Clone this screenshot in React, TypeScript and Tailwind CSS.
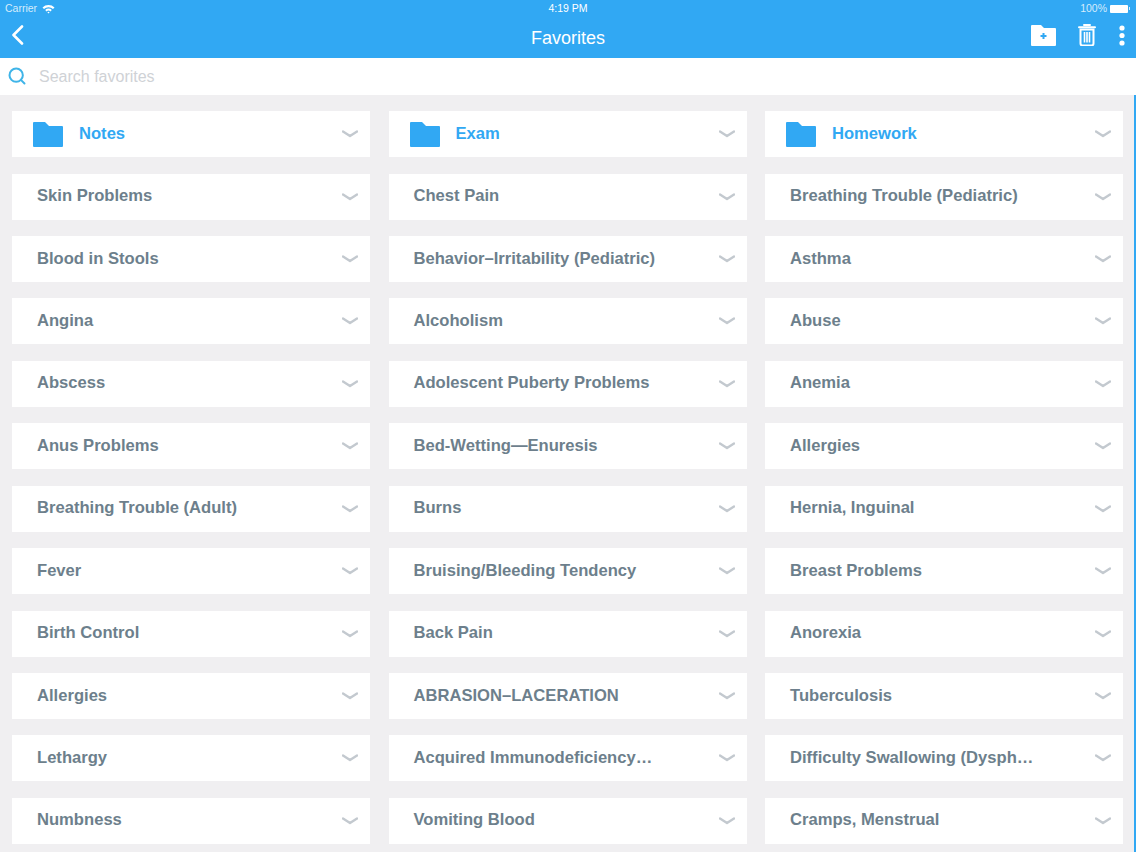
import React from 'react';
import { Search } from 'lucide-react';

const folders = ['Notes', 'Exam', 'Homework'];

const rows = [
    ['Skin Problems', 'Chest Pain', 'Breathing Trouble (Pediatric)'],
    ['Blood in Stools', 'Behavior–Irritability (Pediatric)', 'Asthma'],
    ['Angina', 'Alcoholism', 'Abuse'],
    ['Abscess', 'Adolescent Puberty Problems', 'Anemia'],
    ['Anus Problems', 'Bed-Wetting—Enuresis', 'Allergies'],
    ['Breathing Trouble (Adult)', 'Burns', 'Hernia, Inguinal'],
    ['Fever', 'Bruising/Bleeding Tendency', 'Breast Problems'],
    ['Birth Control', 'Back Pain', 'Anorexia'],
    ['Allergies', 'ABRASION–LACERATION', 'Tuberculosis'],
    ['Lethargy', 'Acquired Immunodeficiency…', 'Difficulty Swallowing (Dysph…'],
    ['Numbness', 'Vomiting Blood', 'Cramps, Menstrual'],
];

const Chevron = () => (
    <svg width="16" height="8" viewBox="0 0 16 8" className="shrink-0">
        <path d="M1 1.5 L8 6 L15 1.5" fill="none" stroke="#c3c9cf" strokeWidth="2.4" strokeLinecap="round" strokeLinejoin="round" />
    </svg>
);

const FolderIcon = () => (
    <svg width="30" height="25" viewBox="0 0 30 25" className="shrink-0">
        <path d="M0 1 Q0 0 1 0 H12 L16 4 H29 Q30 4 30 5 V24 Q30 25 29 25 H1 Q0 25 0 24 Z" fill="#31a8f3" />
    </svg>
);

const Card = ({ children }: { children: React.ReactNode }) => (
    <div className="h-[46px] bg-white flex items-center justify-between pr-[12px]">
        {children}
    </div>
);

export default function App() {
    return (
        <div className="w-[1136px] h-[852px] overflow-hidden flex flex-col bg-[#f0eff1] font-['Liberation_Sans',sans-serif]">
            {/* Header */}
            <header className="h-[58px] shrink-0 bg-[#31a8f3] text-white relative flex flex-col">
                <div className="h-[17px] pl-[5px] pr-[6px] flex items-center justify-between text-[10.5px] leading-none text-[#d5ecfc]">
                    <div className="flex items-center gap-[5px]">
                        <span>Carrier</span>
                        <svg width="13" height="10" viewBox="0 0 13 10">
                            <path d="M0.5 3.4 A8.5 8.5 0 0 1 12.5 3.4 L11 5 A6.4 6.4 0 0 0 2 5 Z" fill="#fff" />
                            <path d="M3.2 6 A4.6 4.6 0 0 1 9.8 6 L8.4 7.4 A2.6 2.6 0 0 0 4.6 7.4 Z" fill="#fff" />
                            <path d="M5.4 8.2 A1.6 1.6 0 0 1 7.6 8.2 L6.5 9.5 Z" fill="#fff" />
                        </svg>
                    </div>
                    <span className="absolute left-1/2 -translate-x-1/2 text-white">4:19 PM</span>
                    <div className="flex items-center gap-[3px]">
                        <span>100%</span>
                        <div className="w-[18px] h-[8px] bg-white rounded-[1px]" />
                        <div className="w-[1px] h-[3px] bg-[#d5ecfc] -ml-[2px]" />
                    </div>
                </div>
                <div className="flex-1 flex items-center justify-between pl-[11px] pr-[11px] pb-[5px]">
                    <svg width="13" height="20" viewBox="0 0 13 20">
                        <path d="M11 1.5 L2.5 10 L11 18.5" fill="none" stroke="#fff" strokeWidth="2.6" strokeLinecap="round" strokeLinejoin="round" />
                    </svg>
                    <h1 className="absolute left-0 right-0 top-[28px] text-center text-[18px] leading-[20px] font-normal">Favorites</h1>
                    <div className="flex items-center">
                        <svg width="25" height="21" viewBox="0 0 25 21">
                            <path d="M0 1 Q0 0 1 0 H10 L13 3 H24 Q25 3 25 4 V20 Q25 21 24 21 H1 Q0 21 0 20 Z" fill="#fff" />
                            <path d="M12.5 8 V14 M9.5 11 H15.5" stroke="#31a8f3" strokeWidth="2" />
                        </svg>
                        <svg width="18" height="22" viewBox="0 0 18 22" className="ml-[22px]">
                            <path d="M6 1 H12 M1 3.2 H17" stroke="#fff" strokeWidth="2" strokeLinecap="round" />
                            <path d="M2.5 5.5 H15.5 V19.5 Q15.5 21.5 13.5 21.5 H4.5 Q2.5 21.5 2.5 19.5 Z" fill="none" stroke="#fff" strokeWidth="2" />
                            <path d="M6.5 8 V18.5 M9 8 V18.5 M11.5 8 V18.5" stroke="#fff" strokeWidth="1.6" />
                        </svg>
                        <svg width="6" height="21" viewBox="0 0 6 21" className="ml-[23px]">
                            <circle cx="3" cy="3" r="2.6" fill="#fff" />
                            <circle cx="3" cy="10.5" r="2.6" fill="#fff" />
                            <circle cx="3" cy="18" r="2.6" fill="#fff" />
                        </svg>
                    </div>
                </div>
            </header>

            {/* Search */}
            <div className="h-[37px] shrink-0 bg-white flex items-center pl-[7px]">
                <Search size={20} strokeWidth={2.4} className="text-[#3fb4e8] -mt-[2px]" />
                <span className="ml-[12px] text-[16px] leading-[20px] mt-[1px] text-[#cfd2d6]">Search favorites</span>
            </div>

            {/* Grid */}
            <main className="relative flex-1 pt-[16.2px] pl-[12px]">
                <div className="w-[1111px] grid grid-cols-3 gap-x-[18.5px] gap-y-[16.43px]">
                    {folders.map((name) => (
                        <Card key={name}>
                            <div className="flex items-center pl-[21px] gap-[16px]">
                                <FolderIcon />
                                <span className="text-[16.6px] font-bold text-[#31a8f3]">{name}</span>
                            </div>
                            <Chevron />
                        </Card>
                    ))}
                    {rows.flat().map((label, idx) => (
                        <Card key={idx}>
                            <span className="pl-[25px] text-[16.6px] font-bold text-[#6d7f8c] whitespace-nowrap">{label}</span>
                            <Chevron />
                        </Card>
                    ))}
                </div>
                <div className="absolute right-0 top-0 bottom-0 w-[2px] bg-[#31a8f3]" />
            </main>
        </div>
    );
}
